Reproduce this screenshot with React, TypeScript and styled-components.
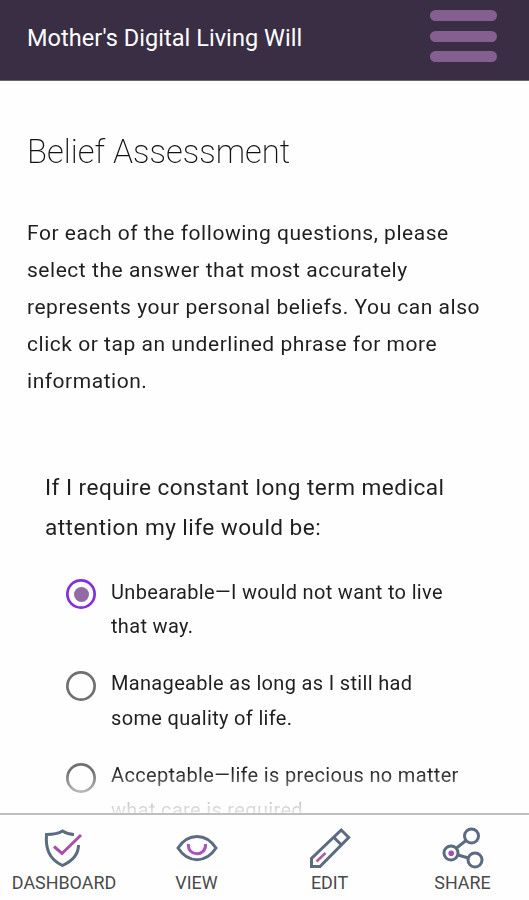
import React from 'react';
import styled, { createGlobalStyle } from 'styled-components';

const GlobalStyle = createGlobalStyle`
  * { box-sizing: border-box; }
  body { margin: 0; background: #fff; }
`;

const Screen = styled.div`
  display: flex;
  flex-direction: column;
  width: 529px;
  height: 900px;
  overflow: hidden;
  background: #fefefe;
  color: #1f1f1f;
  font-family: Roboto, 'Liberation Sans', sans-serif;
`;

const Header = styled.header`
  display: flex;
  flex: none;
  justify-content: space-between;
  align-items: flex-start;
  height: 81px;
  padding: 0 32px 0 27px;
  background: #3a2e44;
  border-bottom: 1px solid #6c6373;
`;

const AppTitle = styled.div`
  padding-top: 22px;
  color: #fff;
  font-size: 23.5px;
  line-height: 32px;
  letter-spacing: 0.05px;
  white-space: nowrap;
`;

const MenuButton = styled.button`
  display: flex;
  flex-direction: column;
  gap: 9.6px;
  width: 67px;
  margin-top: 10px;
  padding: 0;
  border: 0;
  background: none;
`;

const MenuBar = styled.span`
  height: 11px;
  border-radius: 6px;
  background: #865f91;
`;

const Content = styled.main`
  flex: none;
  height: 732px;
  padding: 50px 27px 0;
  overflow: hidden;
  white-space: nowrap;
  mask-image: linear-gradient(#000 690px, rgba(0, 0, 0, 0.24) 722px, rgba(0, 0, 0, 0.12) 731px);
`;

const Heading = styled.h1`
  margin: 0;
  font-size: 32.9px;
  font-weight: 200;
  line-height: 42px;
  color: #111;
`;

const Intro = styled.p`
  margin: 42px 0 0;
  font-size: 21px;
  line-height: 37px;
  letter-spacing: 0.53px;
`;

const Question = styled.section`
  padding: 67.5px 0 0 18px;
`;

const Prompt = styled.h2`
  margin: 0;
  font-size: 22.6px;
  font-weight: 400;
  line-height: 40px;
  letter-spacing: 0.45px;
`;

const Options = styled.div`
  display: flex;
  flex-direction: column;
  gap: 23px;
  padding: 27px 0 0 21px;
`;

const Option = styled.label`
  display: flex;
  gap: 15px;
  font-size: 20px;
  line-height: 34.4px;
  letter-spacing: 0.33px;
`;

const Radio = styled.span<{ $checked?: boolean }>`
  display: flex;
  flex: none;
  justify-content: center;
  align-items: center;
  width: 30px;
  height: 30px;
  margin-top: 4.5px;
  border-radius: 50%;
  box-shadow: inset 0 0 0 2.7px ${(p) => (p.$checked ? '#8130dc' : '#707070')};

  &::after {
    content: '';
    display: ${(p) => (p.$checked ? 'block' : 'none')};
    width: 15px;
    height: 15px;
    border-radius: 50%;
    background: #916ba6;
  }
`;

const TabBar = styled.nav`
  display: flex;
  flex: none;
  height: 87px;
  border-top: 2px solid #bfbfbf;
`;

const Tab = styled.a<{ $width: number }>`
  display: flex;
  flex-direction: column;
  align-items: center;
  flex: none;
  width: ${(p) => p.$width}px;
  padding-top: 11px;
  color: #4a4a4a;
  font-size: 17.9px;
  line-height: 22px;
`;

const Icon = styled.svg`
  width: 44px;
  height: 46px;
  overflow: visible;
  fill: none;
  stroke: #5b6b80;
  stroke-width: 3;
`;

const ShieldIcon = () => (
  <Icon viewBox="0 0 44 46">
    <path d="M32 8.500C28 8.500 24.500 7.500 20.500 5C16.500 7.500 11 8.500 4.500 8.500C3.500 22 6.500 33 20.500 39.500C31.500 34.500 36.500 27.500 36.500 19" />
    <path d="M12 20.500L20 27.500L39 9" stroke="#a850a8" strokeWidth="3" />
  </Icon>
);

const EyeIcon = () => (
  <Icon viewBox="0 0 44 46">
    <path d="M3 22C13 6.500 31 6.500 41 22C31 37.500 13 37.500 3 22Z" />
    <path d="M13.500 18C12 31 31.500 31 30.500 18" stroke="#aa55bd" />
  </Icon>
);

const PencilIcon = () => (
  <Icon viewBox="0 0 44 46">
    <path d="M33.200 4L40.700 11.500L12 40.500H3.500V32.500Z" />
    <path d="M26 11.500L34 19.500" />
    <path d="M8.500 35.500L17.500 27" stroke="#b05ca5" strokeWidth="2.600" />
  </Icon>
);

const ShareIcon = () => (
  <Icon viewBox="0 0 44 46">
    <circle cx="30.500" cy="10" r="7" />
    <circle cx="10" cy="27" r="7" />
    <circle cx="34" cy="34" r="7" />
    <path d="M15.500 22L25 14.500M17 29L27.500 32" />
    <circle cx="10.200" cy="27.200" r="2.800" fill="#a84fae" stroke="none" />
  </Icon>
);

const answers = [
  { lines: ['Unbearable—I would not want to live', 'that way.'], checked: true },
  { lines: ['Manageable as long as I still had', 'some quality of life.'], checked: false },
  { lines: ['Acceptable—life is precious no matter', 'what care is required.'], checked: false },
];

const tabs = [
  { label: 'DASHBOARD', icon: <ShieldIcon />, width: 128 },
  { label: 'VIEW', icon: <EyeIcon />, width: 137 },
  { label: 'EDIT', icon: <PencilIcon />, width: 129 },
  { label: 'SHARE', icon: <ShareIcon />, width: 137 },
];

export default function App() {
  return (
    <Screen>
      <GlobalStyle />
      <Header>
        <AppTitle>Mother's Digital Living Will</AppTitle>
        <MenuButton aria-label="Menu">
          <MenuBar />
          <MenuBar />
          <MenuBar />
        </MenuButton>
      </Header>
      <Content>
        <Heading>Belief Assessment</Heading>
        <Intro>
          For each of the following questions, please<br />
          select the answer that most accurately<br />
          represents your personal beliefs. You can also<br />
          click or tap an underlined phrase for more<br />
          information.
        </Intro>
        <Question>
          <Prompt>
            If I require constant long term medical<br />
            attention my life would be:
          </Prompt>
          <Options>
            {answers.map((a) => (
              <Option key={a.lines[0]}>
                <Radio $checked={a.checked} />
                <span>
                  {a.lines[0]}
                  <br />
                  {a.lines[1]}
                </span>
              </Option>
            ))}
          </Options>
        </Question>
      </Content>
      <TabBar>
        {tabs.map((t) => (
          <Tab key={t.label} $width={t.width}>
            {t.icon}
            {t.label}
          </Tab>
        ))}
      </TabBar>
    </Screen>
  );
}
